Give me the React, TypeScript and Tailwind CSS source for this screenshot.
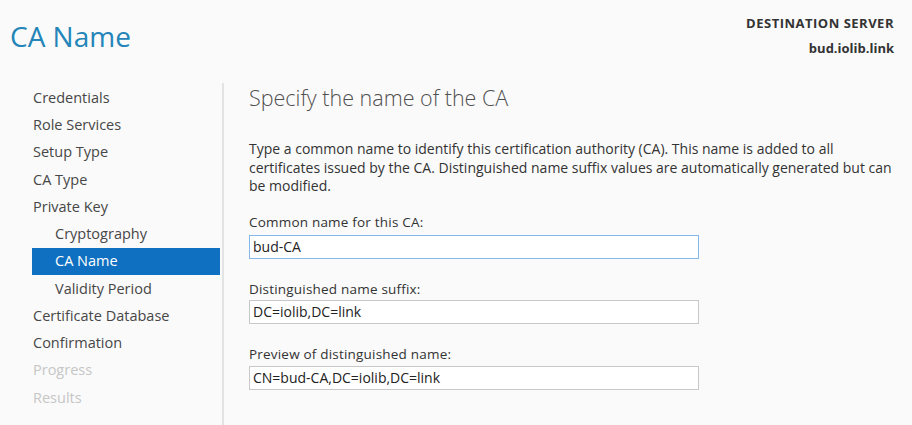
import React from "react";

const font = { fontFamily: '"Open Sans", "Noto Sans", sans-serif' };

type Item = { label: string; sub?: boolean; active?: boolean; disabled?: boolean };

const items: Item[] = [
  { label: "Credentials" },
  { label: "Role Services" },
  { label: "Setup Type" },
  { label: "CA Type" },
  { label: "Private Key" },
  { label: "Cryptography", sub: true },
  { label: "CA Name", sub: true, active: true },
  { label: "Validity Period", sub: true },
  { label: "Certificate Database" },
  { label: "Confirmation" },
  { label: "Progress", disabled: true },
  { label: "Results", disabled: true },
];

function Field({ label, value, focused, labelClass }: { label: string; value: string; focused?: boolean; labelClass: string }) {
  return (
    <div className="flex flex-col">
      <div className={`text-[13.5px] tracking-[0.2px] leading-[18px] text-[#333333] ${labelClass}`}>{label}</div>
      <div
        className={`w-[450px] h-[24px] flex items-center pl-[3px] text-[14px] text-[#222222] bg-white border ${
          focused ? "border-[#86b7ea]" : "border-[#c8c8c8]"
        }`}
      >
        {value}
      </div>
    </div>
  );
}

export default function App() {
  return (
    <div className="w-[912px] h-[425px] bg-[#fafafa] overflow-hidden flex flex-col" style={font}>
      <div className="flex justify-between h-[83px] shrink-0">
        <div className="pl-[10px] pt-[16px] text-[28px] leading-[40px] text-[#2385b8]">CA Name</div>
        <div className="pr-[18px] pt-[11px] text-right text-[13px] font-bold text-[#333333] leading-[25px]">
          <div className="tracking-[0.5px]">DESTINATION SERVER</div>
          <div>bud.iolib.link</div>
        </div>
      </div>
      <div className="flex flex-1">
        <div className="w-[224px] shrink-0 border-r-2 border-[#e3e3e3] pl-[32px] pr-[2px] pt-[1px]">
          {items.map((it) => (
            <div
              key={it.label}
              className={`h-[27.25px] flex items-center text-[14.5px] ${it.sub ? "pl-[23px]" : "pl-[1px]"} ${
                it.active ? "bg-[#0f6fc0] text-white" : it.disabled ? "text-[#c6c6c6]" : "text-[#474747]"
              }`}
            >
              {it.label}
            </div>
          ))}
        </div>
        <div className="flex-1 min-w-0 pl-[25px] pt-[1px]">
          <div className="text-[21.5px] leading-[28px] font-light text-[#505050]">Specify the name of the CA</div>
          <div className="mt-[28px] text-[14px] leading-[18.5px] text-[#333333] whitespace-nowrap">
            Type a common name to identify this certification authority (CA). This name is added to all
            <br />
            certificates issued by the CA. Distinguished name suffix values are automatically generated but can
            <br />
            be modified.
          </div>
          <div className="mt-[17px] flex flex-col">
            <Field label="Common name for this CA:" value="bud-CA" focused labelClass="mb-[4px]" />
            <div className="mt-[21px]">
              <Field label="Distinguished name suffix:" value="DC=iolib,DC=link" labelClass="mb-[2px]" />
            </div>
            <div className="mt-[21px]">
              <Field label="Preview of distinguished name:" value="CN=bud-CA,DC=iolib,DC=link" labelClass="mb-[3px]" />
            </div>
          </div>
        </div>
      </div>
    </div>
  );
}
